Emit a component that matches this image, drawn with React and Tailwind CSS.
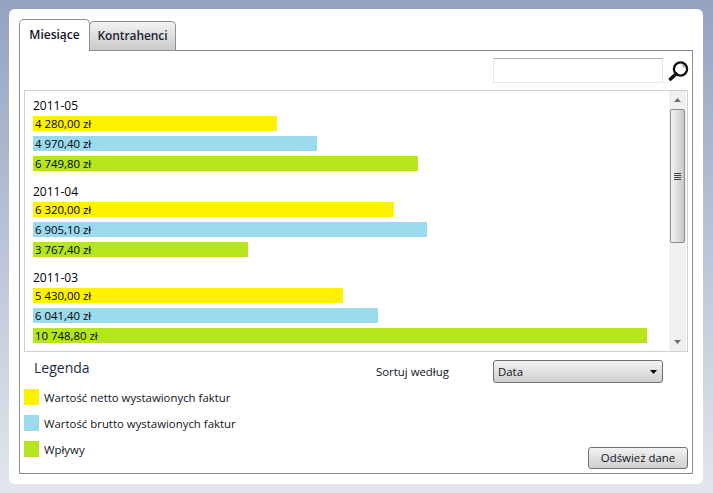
import React from "react";

const months = [
  { date: "2011-05", net: [4280, "4 280,00 zł"], gross: [4970.4, "4 970,40 zł"], paid: [6749.8, "6 749,80 zł"] },
  { date: "2011-04", net: [6320, "6 320,00 zł"], gross: [6905.1, "6 905,10 zł"], paid: [3767.4, "3 767,40 zł"] },
  { date: "2011-03", net: [5430, "5 430,00 zł"], gross: [6041.4, "6 041,40 zł"], paid: [10748.8, "10 748,80 zł"] },
];

const SCALE = 0.0571;

function Bar({ item, color }) {
  return (
    <div className={`h-[15px] pl-[2px] leading-[15px] whitespace-nowrap text-black ${color}`} style={{ width: Math.round(item[0] * SCALE) }}>
      {item[1]}
    </div>
  );
}

function Arrow({ up }) {
  return (
    <svg width="7" height="4" viewBox="0 0 7 4" className="text-[#6b6f75]">
      <path d={up ? "M3.5 0 L7 4 L0 4 Z" : "M0 0 L7 0 L3.5 4 Z"} fill="currentColor" />
    </svg>
  );
}

function LegendRow({ color, label }) {
  return (
    <div className="flex items-center h-[16px]">
      <div className={`w-[15px] h-[16px] ${color}`}></div>
      <span className="ml-[5px] pt-[2px]">{label}</span>
    </div>
  );
}

export default function App() {
  return (
    <div className="h-[493px] w-[713px] overflow-hidden bg-gradient-to-b from-[#93a3c0] to-[#e3e6ed] pt-[9px] pl-[9px] pr-[10px] text-[11.4px] text-[#10141c] [font-family:'Open_Sans',sans-serif]">
      <div className="h-[475px] rounded-[6px] bg-white pt-[10px] pl-[10px] pr-[10px]">
        <div className="flex h-[31px] items-end text-[12px]">
          <div className="relative z-10 -mb-px flex h-[32px] w-[71px] items-center justify-center rounded-t-[5px] border border-b-0 border-[#8d8f94] bg-white font-semibold pb-[2px]">
            Miesiące
          </div>
          <div className="-ml-px flex h-[29px] w-[87px] items-center justify-center rounded-t-[5px] border border-b-0 border-[#8d8f94] bg-gradient-to-b from-[#f4f4f4] to-[#c9c9c9] font-semibold tracking-[-0.1px] text-[#1d2433]">
            Kontrahenci
          </div>
        </div>
        <div className="h-[424px] w-[674px] border border-[#8d8f94] pt-[7px] pl-[4px] pr-[4px]">
          <div className="flex h-[24px] items-center justify-end">
            <div className="h-[25px] w-[170px] border border-t-[#abadb3] border-l-[#dfe8f0] border-r-[#dfe8f0] border-b-[#e3e9ef] bg-white"></div>
            <svg width="23" height="23" viewBox="0 0 23 23" className="ml-[5px] mr-[-3px]">
              <circle cx="12.5" cy="10" r="6.6" fill="white" stroke="#111" strokeWidth="2.3" />
              <path d="M8 15 L2.5 20" stroke="#111" strokeWidth="3.6" strokeLinecap="round" />
              <path d="M14 6 Q16 7 16.5 9" stroke="#9a9a9a" strokeWidth="1.2" fill="none" />
            </svg>
          </div>
          <div className="mt-[8px] flex h-[262px] w-[664px] border border-[#d0d0d0] overflow-hidden">
            <div className="flex-1 overflow-hidden pt-[7px] pl-[8px]">
              {months.map((m) => (
                <div key={m.date} className="mb-[13px]">
                  <div className="h-[18px] text-[12px] font-medium leading-[16px] text-black">{m.date}</div>
                  <div className="flex flex-col gap-[5px]">
                    <Bar item={m.net} color="bg-[#fff200]" />
                    <Bar item={m.gross} color="bg-[#9bd9ec]" />
                    <Bar item={m.paid} color="bg-[#b5e61d]" />
                  </div>
                </div>
              ))}
            </div>
            <div className="mr-[1px] flex w-[17px] flex-col items-center bg-[#f0f0f0]">
              <div className="flex h-[18px] items-center justify-center"><Arrow up /></div>
              <div className="flex h-[134px] w-[15px] items-center justify-center rounded-[2px] border border-[#8e8f8f] bg-gradient-to-r from-[#f2f2f2] to-[#c8c8c8]">
                <div className="flex flex-col gap-px">
                  <div className="h-px w-[7px] bg-[#444]"></div>
                  <div className="h-px w-[7px] bg-[#444]"></div>
                  <div className="h-px w-[7px] bg-[#444]"></div>
                  <div className="h-px w-[7px] bg-[#444]"></div>
                </div>
              </div>
              <div className="flex-1"></div>
              <div className="flex h-[18px] items-center justify-center"><Arrow /></div>
            </div>
          </div>
          <div className="mt-[8px] flex h-[24px] items-start">
            <div className="w-[352px] pl-[10px] text-[14px] leading-[16px] text-[#1d2b3f]">Legenda</div>
            <div className="w-[117px] pt-[4px] leading-[16px]">Sortuj według</div>
            <div className="flex h-[23px] w-[170px] items-center justify-between rounded-[3px] border border-[#707070] bg-gradient-to-b from-[#f2f2f2] to-[#cfcfcf] pl-[4px] pr-[5px]">
              <span>Data</span>
              <svg width="7" height="4" viewBox="0 0 7 4"><path d="M0 0 L7 0 L3.5 4 Z" fill="#000" /></svg>
            </div>
          </div>
          <div className="mt-[5px] flex items-start justify-between">
            <div className="flex flex-col gap-[10px]">
              <LegendRow color="bg-[#fff200]" label="Wartość netto wystawionych faktur" />
              <LegendRow color="bg-[#9bd9ec]" label="Wartość brutto wystawionych faktur" />
              <LegendRow color="bg-[#b5e61d]" label="Wpływy" />
            </div>
            <div className="mt-[58px] flex h-[22px] w-[100px] items-center justify-center rounded-[3px] border border-[#707070] bg-gradient-to-b from-[#f2f2f2] to-[#cfcfcf]">
              Odśwież dane
            </div>
          </div>
        </div>
      </div>
    </div>
  );
}
